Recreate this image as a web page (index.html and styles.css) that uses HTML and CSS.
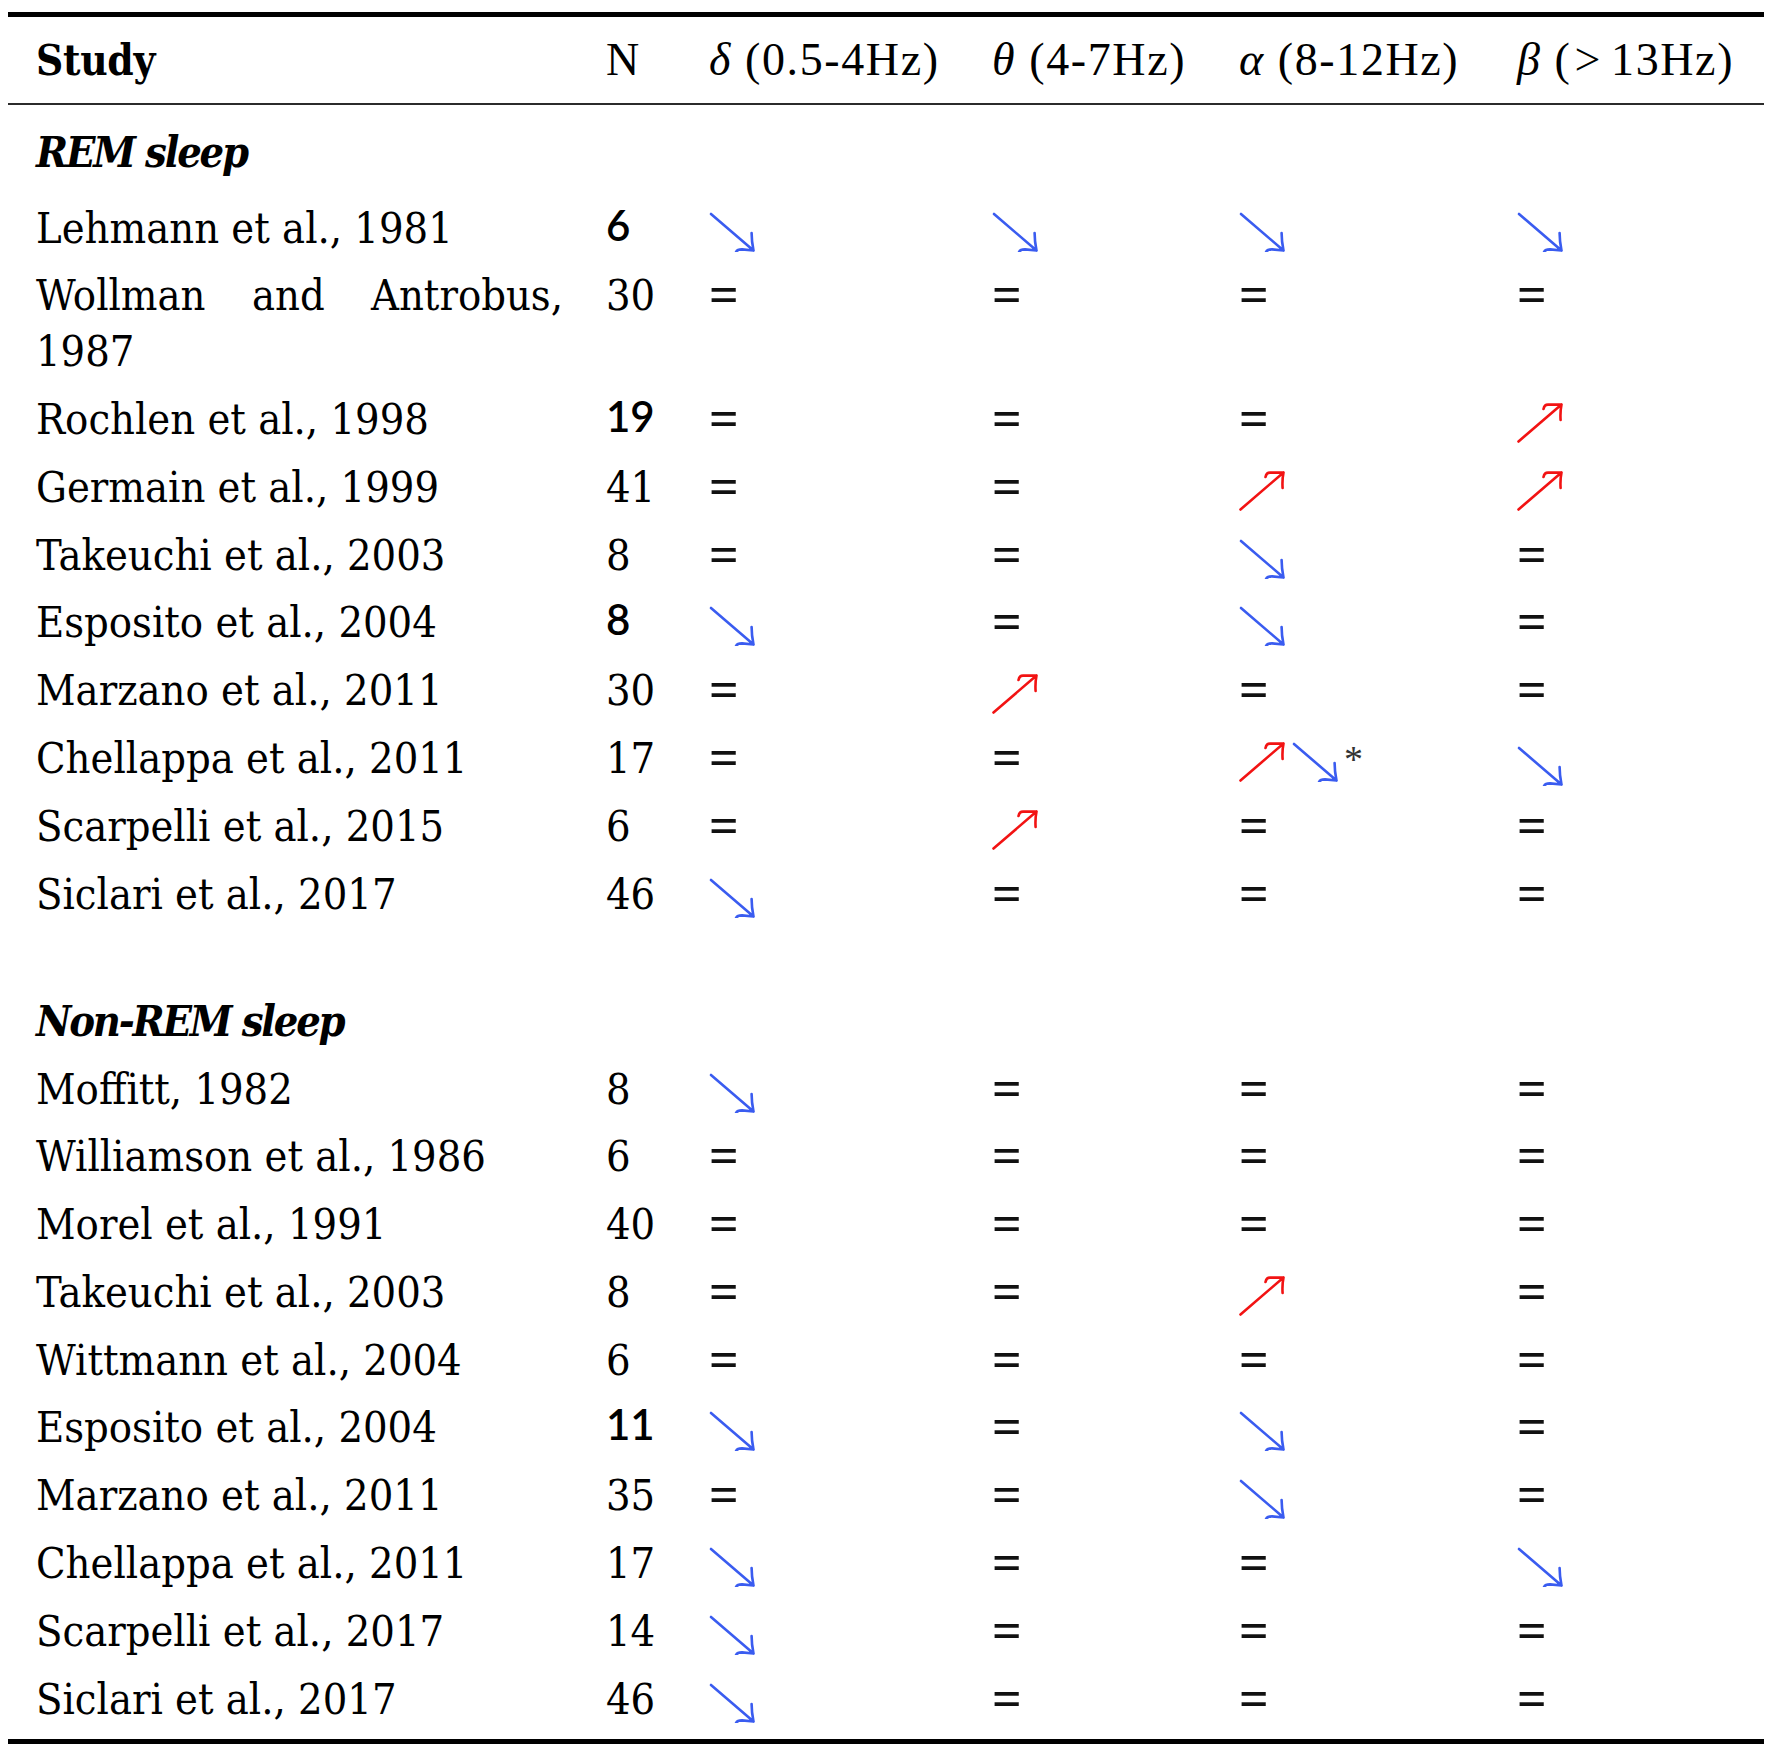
FILE: index.html
```html
<!DOCTYPE html>
<html lang="en">
<head>
<meta charset="utf-8">
<title>EEG spectral power findings</title>
<link rel="stylesheet" href="styles.css">
</head>
<body>
<svg class="defs" aria-hidden="true" width="0" height="0">
  <symbol id="a-dn" viewBox="0 0 46 40">
    <path d="M2 2 L44.5 38.5 M27 40 C28 38 30 37.4 33 37.4 L44.5 38.5 M42.6 21 C42.6 27 43.4 33 44.5 38.5"/>
  </symbol>
  <symbol id="a-up" viewBox="0 0 46 40">
    <path d="M1.5 38.5 L44.5 1.5 M26.5 6 C27 3.5 28.5 1.6 31 1.6 L44.5 1.5 M44.5 1.5 C43.6 6 43.2 11 43.6 17"/>
  </symbol>
</svg>
<div class="page">
<table class="results">
  <colgroup>
    <col class="col-study"><col class="col-n"><col class="col-d"><col class="col-t"><col class="col-a"><col class="col-b">
  </colgroup>
  <thead>
    <tr>
      <th class="h-study">Study</th>
      <th>N</th>
      <th><span class="greek">δ</span> (0.5-4Hz)</th>
      <th><span class="greek">θ</span> (4-7Hz)</th>
      <th><span class="greek">α</span> (8-12Hz)</th>
      <th><span class="greek">β</span> (<span class="rel">&gt;</span>13Hz)</th>
    </tr>
  </thead>
  <tbody>
    <tr class="section"><td colspan="6">REM sleep</td></tr>
    <tr>
      <td>Lehmann et al., 1981</td><td><span class="sans">6</span></td>
      <td><svg class="arr arr--dn" viewBox="0 0 46 40"><use href="#a-dn"/></svg></td>
      <td><svg class="arr arr--dn" viewBox="0 0 46 40"><use href="#a-dn"/></svg></td>
      <td><svg class="arr arr--dn" viewBox="0 0 46 40"><use href="#a-dn"/></svg></td>
      <td><svg class="arr arr--dn" viewBox="0 0 46 40"><use href="#a-dn"/></svg></td>
    </tr>
    <tr>
      <td>Wollman and Antrobus, 1987</td><td>30</td>
      <td><span class="eq">=</span></td><td><span class="eq">=</span></td><td><span class="eq">=</span></td><td><span class="eq">=</span></td>
    </tr>
    <tr>
      <td>Rochlen et al., 1998</td><td><span class="sans">19</span></td>
      <td><span class="eq">=</span></td><td><span class="eq">=</span></td><td><span class="eq">=</span></td>
      <td><svg class="arr arr--up" viewBox="0 0 46 40"><use href="#a-up"/></svg></td>
    </tr>
    <tr>
      <td>Germain et al., 1999</td><td>41</td>
      <td><span class="eq">=</span></td><td><span class="eq">=</span></td>
      <td><svg class="arr arr--up" viewBox="0 0 46 40"><use href="#a-up"/></svg></td>
      <td><svg class="arr arr--up" viewBox="0 0 46 40"><use href="#a-up"/></svg></td>
    </tr>
    <tr>
      <td>Takeuchi et al., 2003</td><td>8</td>
      <td><span class="eq">=</span></td><td><span class="eq">=</span></td>
      <td><svg class="arr arr--dn" viewBox="0 0 46 40"><use href="#a-dn"/></svg></td>
      <td><span class="eq">=</span></td>
    </tr>
    <tr>
      <td>Esposito et al., 2004</td><td><span class="sans">8</span></td>
      <td><svg class="arr arr--dn" viewBox="0 0 46 40"><use href="#a-dn"/></svg></td>
      <td><span class="eq">=</span></td>
      <td><svg class="arr arr--dn" viewBox="0 0 46 40"><use href="#a-dn"/></svg></td>
      <td><span class="eq">=</span></td>
    </tr>
    <tr>
      <td>Marzano et al., 2011</td><td>30</td>
      <td><span class="eq">=</span></td>
      <td><svg class="arr arr--up" viewBox="0 0 46 40"><use href="#a-up"/></svg></td>
      <td><span class="eq">=</span></td><td><span class="eq">=</span></td>
    </tr>
    <tr>
      <td>Chellappa et al., 2011</td><td>17</td>
      <td><span class="eq">=</span></td><td><span class="eq">=</span></td>
      <td><svg class="arr arr--up" viewBox="0 0 46 40"><use href="#a-up"/></svg><svg class="arr arr--dn arr--next" viewBox="0 0 46 40"><use href="#a-dn"/></svg><span class="star">*</span></td>
      <td><svg class="arr arr--dn arr--low" viewBox="0 0 46 40"><use href="#a-dn"/></svg></td>
    </tr>
    <tr>
      <td>Scarpelli et al., 2015</td><td>6</td>
      <td><span class="eq">=</span></td>
      <td><svg class="arr arr--up" viewBox="0 0 46 40"><use href="#a-up"/></svg></td>
      <td><span class="eq">=</span></td><td><span class="eq">=</span></td>
    </tr>
    <tr>
      <td>Siclari et al., 2017</td><td>46</td>
      <td><svg class="arr arr--dn" viewBox="0 0 46 40"><use href="#a-dn"/></svg></td>
      <td><span class="eq">=</span></td><td><span class="eq">=</span></td><td><span class="eq">=</span></td>
    </tr>

    <tr class="section section--gap"><td colspan="6">Non-REM sleep</td></tr>
    <tr>
      <td>Moffitt, 1982</td><td>8</td>
      <td><svg class="arr arr--dn" viewBox="0 0 46 40"><use href="#a-dn"/></svg></td>
      <td><span class="eq">=</span></td><td><span class="eq">=</span></td><td><span class="eq">=</span></td>
    </tr>
    <tr>
      <td>Williamson et al., 1986</td><td>6</td>
      <td><span class="eq">=</span></td><td><span class="eq">=</span></td><td><span class="eq">=</span></td><td><span class="eq">=</span></td>
    </tr>
    <tr>
      <td>Morel et al., 1991</td><td>40</td>
      <td><span class="eq">=</span></td><td><span class="eq">=</span></td><td><span class="eq">=</span></td><td><span class="eq">=</span></td>
    </tr>
    <tr>
      <td>Takeuchi et al., 2003</td><td>8</td>
      <td><span class="eq">=</span></td><td><span class="eq">=</span></td>
      <td><svg class="arr arr--up" viewBox="0 0 46 40"><use href="#a-up"/></svg></td>
      <td><span class="eq">=</span></td>
    </tr>
    <tr>
      <td>Wittmann et al., 2004</td><td>6</td>
      <td><span class="eq">=</span></td><td><span class="eq">=</span></td><td><span class="eq">=</span></td><td><span class="eq">=</span></td>
    </tr>
    <tr>
      <td>Esposito et al., 2004</td><td><span class="sans">11</span></td>
      <td><svg class="arr arr--dn" viewBox="0 0 46 40"><use href="#a-dn"/></svg></td>
      <td><span class="eq">=</span></td>
      <td><svg class="arr arr--dn" viewBox="0 0 46 40"><use href="#a-dn"/></svg></td>
      <td><span class="eq">=</span></td>
    </tr>
    <tr>
      <td>Marzano et al., 2011</td><td>35</td>
      <td><span class="eq">=</span></td><td><span class="eq">=</span></td>
      <td><svg class="arr arr--dn" viewBox="0 0 46 40"><use href="#a-dn"/></svg></td>
      <td><span class="eq">=</span></td>
    </tr>
    <tr>
      <td>Chellappa et al., 2011</td><td>17</td>
      <td><svg class="arr arr--dn" viewBox="0 0 46 40"><use href="#a-dn"/></svg></td>
      <td><span class="eq">=</span></td><td><span class="eq">=</span></td>
      <td><svg class="arr arr--dn" viewBox="0 0 46 40"><use href="#a-dn"/></svg></td>
    </tr>
    <tr>
      <td>Scarpelli et al., 2017</td><td>14</td>
      <td><svg class="arr arr--dn" viewBox="0 0 46 40"><use href="#a-dn"/></svg></td>
      <td><span class="eq">=</span></td><td><span class="eq">=</span></td><td><span class="eq">=</span></td>
    </tr>
    <tr class="last">
      <td>Siclari et al., 2017</td><td>46</td>
      <td><svg class="arr arr--dn" viewBox="0 0 46 40"><use href="#a-dn"/></svg></td>
      <td><span class="eq">=</span></td><td><span class="eq">=</span></td><td><span class="eq">=</span></td>
    </tr>
  </tbody>
</table>
</div>
</body>
</html>
```

FILE: styles.css
```css
html, body {
  margin: 0;
  padding: 0;
  background: #ffffff;
}

body {
  font-family: "DejaVu Serif Condensed", "DejaVu Serif", serif;
  font-stretch: condensed;
  font-size: 43px;
  color: #000000;
}

.defs {
  position: absolute;
  width: 0;
  height: 0;
  overflow: hidden;
}

.page {
  padding: 12px 8px 0;
}

.results {
  width: 1756px;
  table-layout: fixed;
  border-collapse: separate;
  border-spacing: 0;
}

.col-study { width: 598px; }
.col-n { width: 103px; }
.col-d { width: 283px; }
.col-t { width: 247px; }
.col-a { width: 278px; }
.col-b { width: 247px; }

.results th,
.results td {
  padding: 5.9px 0;
  line-height: 56px;
  vertical-align: baseline;
  text-align: left;
  white-space: nowrap;
}

.results th:first-child,
.results td:first-child {
  padding-left: 28px;
  padding-right: 43px;
  text-align: justify;
  white-space: normal;
}

.results thead th {
  font-family: "Liberation Serif", "Times New Roman", serif;
  font-stretch: normal;
  font-size: 46px;
  letter-spacing: 1.6px;
  font-weight: normal;
  padding-top: 14.8px;
  padding-bottom: 14.5px;
  border-top: 5px solid #000000;
  border-bottom: 2px solid #2b2b2b;
}

.results thead th.h-study {
  font-family: "DejaVu Serif Condensed", "DejaVu Serif", serif;
  font-stretch: condensed;
  font-size: 42px;
  letter-spacing: -0.3px;
  font-weight: bold;
}

.greek {
  font-style: italic;
}

.rel {
  margin: 0 9px 0 3px;
}

.results .section td {
  font-weight: bold;
  font-style: italic;
  letter-spacing: -2.2px;
  padding-top: 18.5px;
  padding-bottom: 13.9px;
}

.results .section--gap td {
  padding-top: 65.3px;
  padding-bottom: 5.9px;
}

.results tr.last td {
  padding-bottom: 12.5px;
  border-bottom: 5px solid #000000;
}

.eq {
  font-family: "Liberation Serif", "Times New Roman", serif;
  font-stretch: normal;
  font-weight: bold;
  font-size: 52px;
  line-height: 0;
  vertical-align: -2px;
  color: #111111;
}

.sans {
  font-family: Lato, "Open Sans", sans-serif;
  font-stretch: normal;
  font-weight: 600;
  font-size: 42px;
  line-height: 0;
  vertical-align: 2px;
}

.arr {
  width: 46px;
  height: 40px;
  vertical-align: -9px;
  fill: none;
  stroke-width: 2.6;
  stroke-linecap: round;
  stroke-linejoin: round;
  overflow: visible;
}

.arr--dn { stroke: #3a5cf0; }
.arr--up { stroke: #f21313; }
.arr--next { margin-left: 7px; }
.arr--low { vertical-align: -13px; }

.star {
  font-family: "Liberation Serif", "Times New Roman", serif;
  font-stretch: normal;
  font-size: 38px;
  line-height: 0;
  color: #333333;
  vertical-align: 1px;
  margin-left: 6px;
}
```
